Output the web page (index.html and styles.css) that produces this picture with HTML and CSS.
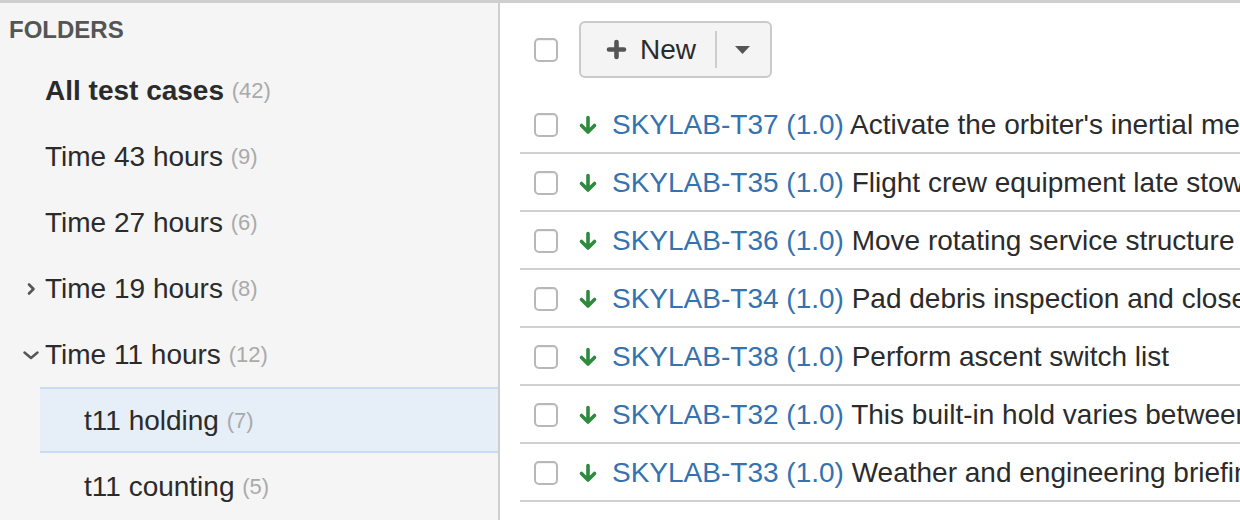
FILE: index.html
```html
<!DOCTYPE html>
<html lang="en">
    <head>
        <meta charset="UTF-8" />
        <meta name="viewport" content="width=device-width, initial-scale=1.0" />
        <title>Test cases</title>
        <link rel="stylesheet" href="styles.css">
    </head>
    <body>
        <aside class="sidebar">
            <h2 class="sidebar-title">FOLDERS</h2>

            <ul class="tree">
                <li class="tree-item root-item">All test cases <span class="count">(42)</span></li>
                <li class="tree-item">Time 43 hours <span class="count">(9)</span></li>
                <li class="tree-item">Time 27 hours <span class="count">(6)</span></li>
                <li class="tree-item">
                    <span class="toggle">
                        <svg width="16" height="16" viewBox="0 0 16 16"><path d="M6 3.5 L10.5 8 L6 12.5" fill="none" stroke="#555" stroke-width="2.6" stroke-linecap="round" stroke-linejoin="round"/></svg>
                    </span>Time 19 hours <span class="count">(8)</span>
                </li>
                <li class="tree-item">
                    <span class="toggle">
                        <svg width="16" height="16" viewBox="0 0 16 16"><path d="M1.5 5.5 L8 11 L14.5 5.5" fill="none" stroke="#555" stroke-width="2.4" stroke-linecap="round" stroke-linejoin="round"/></svg>
                    </span>Time 11 hours <span class="count">(12)</span>
                </li>
                <li class="tree-item child-item selected">t11 holding <span class="count">(7)</span></li>
                <li class="tree-item child-item">t11 counting <span class="count">(5)</span></li>
            </ul>
        </aside>

        <main class="content">
            <div class="toolbar">
                <input type="checkbox" class="check">
                <div class="split-button">
                    <button class="btn-main">
                        <svg width="21" height="21" viewBox="0 0 21 21"><path d="M10.5 3 V18 M3 10.5 H18" stroke="#555" stroke-width="4.6" stroke-linecap="round"/></svg>
                        New
                    </button>
                    <button class="btn-drop">
                        <svg width="15" height="8" viewBox="0 0 15 8"><path d="M0 0 H15 L7.5 8 Z" fill="#555"/></svg>
                    </button>
                </div>
            </div>

            <ul class="cases" id="cases"></ul>
        </main>

        <script>
            // Test cases shown in the selected folder
            const cases = [
                ["SKYLAB-T37", "Activate the orbiter's inertial measurement units"],
                ["SKYLAB-T35", "Flight crew equipment late stow"],
                ["SKYLAB-T36", "Move rotating service structure to park position"],
                ["SKYLAB-T34", "Pad debris inspection and closeout"],
                ["SKYLAB-T38", "Perform ascent switch list"],
                ["SKYLAB-T32", "This built-in hold varies between missions"],
                ["SKYLAB-T33", "Weather and engineering briefing"]
            ];

            const arrow = '<svg class="arrow" width="20" height="20" viewBox="0 0 20 20">' +
                '<path d="M10 2.5 V16.5 M3.5 10.5 L10 17 L16.5 10.5" fill="none" stroke="#2d8a3e" stroke-width="3.6" stroke-linecap="round" stroke-linejoin="round"/></svg>';

            let html = "";
            for (const [key, name] of cases) {
                html += `
                    <li class="case">
                        <input type="checkbox" class="check">
                        ${arrow}
                        <span class="case-text"><a class="case-key" href="#">${key} (1.0)</a> ${name}</span>
                    </li>`;
            }
            document.getElementById("cases").innerHTML = html;
        </script>
    </body>
</html>
```

FILE: styles.css
```css
body {
    margin: 0;
    height: 517px;
    overflow: hidden;
    display: flex;
    border-top: 3px solid #cfcfcf;
    font-family: "Liberation Sans", Arial, sans-serif;
    color: #333;
    background-color: white;
}

.sidebar {
    width: 498px;
    flex-shrink: 0;
    border-right: 2px solid #cfcfcf;
    background-color: #f5f5f5;
}

.sidebar-title {
    margin: 0;
    padding: 13px 9px 13px;
    font-size: 24px;
    line-height: 28px;
    font-weight: bold;
    color: #555;
}

.tree {
    list-style: none;
    margin: 0;
    padding: 0;
}

.tree-item {
    box-sizing: border-box;
    height: 66px;
    display: flex;
    align-items: center;
    padding-left: 45px;
    padding-top: 2px;
    font-size: 28px;
    white-space: pre;
    color: #2b2b2b;
}

.root-item {
    font-weight: bold;
}

.root-item .count {
    font-weight: normal;
}

.toggle {
    width: 22px;
    margin-left: -22px;
    display: flex;
    align-items: center;
}

.child-item {
    margin-left: 40px;
    padding-left: 44px;
}

.selected {
    background-color: #e6eef8;
    border-top: 2px solid #c9dcf1;
    border-bottom: 2px solid #c9dcf1;
}

.count {
    font-size: 22px;
    color: #aaa;
}

.content {
    flex: 1;
    min-width: 0;
    overflow: hidden;
    padding-left: 20px;
}

.toolbar {
    display: flex;
    align-items: center;
    padding: 18px 0 18px 14px;
}

.check {
    appearance: none;
    -webkit-appearance: none;
    margin: 0;
    width: 24px;
    height: 24px;
    flex-shrink: 0;
    box-sizing: border-box;
    border: 2px solid #b8b8b8;
    border-radius: 5px;
    background-color: white;
    box-shadow: inset 0 1px 1px rgba(0, 0, 0, 0.06);
}

.split-button {
    display: flex;
    height: 57px;
    box-sizing: border-box;
    margin-left: 21px;
    border: 2px solid #cacaca;
    border-radius: 6px;
    background-color: #f4f4f4;
}

.split-button button {
    border: none;
    background: none;
    font-family: inherit;
    display: flex;
    align-items: center;
    padding: 0;
    cursor: pointer;
}

.btn-main {
    padding: 0 19px 0 25px !important;
    gap: 13px;
    font-size: 28px;
    color: #2b2b2b;
}

.btn-drop {
    padding: 0 20px 0 18px !important;
    border-left: 2px solid #cdcdcd !important;
    margin: 8px 0;
}

.cases {
    list-style: none;
    margin: 0;
    padding: 0;
}

.case {
    box-sizing: border-box;
    height: 58px;
    display: flex;
    align-items: center;
    padding-left: 14px;
    padding-top: 2px;
    border-bottom: 2px solid #d0d0d0;
    font-size: 28px;
    white-space: nowrap;
}

.arrow {
    flex-shrink: 0;
    margin-left: 20px;
}

.case-text {
    margin-left: 14px;
    color: #2b2b2b;
}

.case-key {
    color: #3572b0;
    text-decoration: none;
}
```
